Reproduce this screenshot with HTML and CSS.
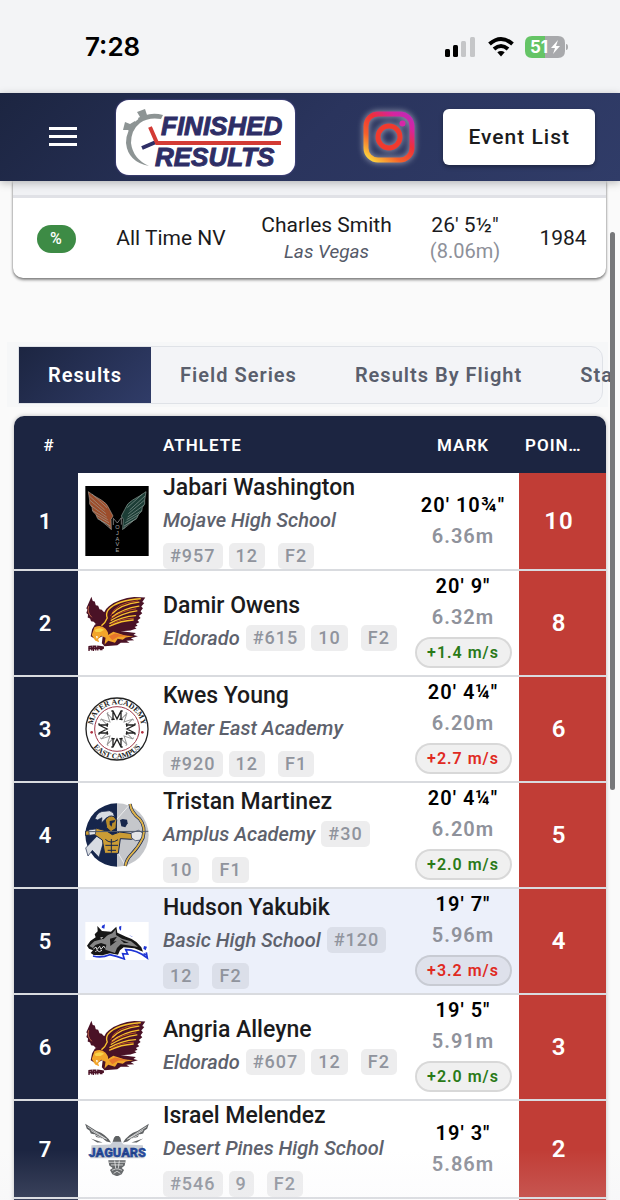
FILE: index.html
```html
<!DOCTYPE html>
<html lang="en">
<head>
    <meta charset="UTF-8">
    <meta name="viewport" content="width=device-width, initial-scale=1.0">
    <title>Finished Results</title>
    <link rel="stylesheet" href="styles.css">
</head>
<body>

    <!-- shared logos -->
    <svg class="defs" aria-hidden="true">
        <symbol id="eagle" viewBox="30 355 190 175">
            <path fill="#4a1226" d="M49 363 L34 397 L37 402 L34 411 L39 416 L38 425 L45 428 L48 436 L56 437 L62 444 L84 442 L96 412 L84 407 L80 402 L73 400 L69 390 L62 388 L59 377 L53 376 Z"/>
            <path fill="none" stroke="#f08a5a" stroke-width="2" d="M41 391 Q35 409 50 424"/>
            <path fill="#4a1226" d="M209 365 L176 364 Q132 368 101 391 Q83 405 87 426 Q76 437 59 446 L51 460 L47 480 L62 490 L95 474 L128 466 L165 463 L183 457 L177 453 L186 449 L181 444 L191 439 L186 433 L195 426 L190 420 L200 412 L195 406 L202 397 L197 392 L206 382 L200 379 Z"/>
            <g fill="none" stroke="#f9c22e" stroke-width="4" stroke-linecap="round">
                <path d="M194 369 Q125 373 99 402 Q91 414 96 426 Q90 441 80 448"/>
                <path d="M190 379 Q137 386 112 412"/>
                <path d="M190 391 Q143 398 111 423"/>
                <path d="M184 405 Q143 411 108 433"/>
                <path d="M180 419 Q139 422 104 442"/>
                <path d="M173 432 Q138 434 103 450"/>
            </g>
            <path fill="none" stroke="#e56a25" stroke-width="2" d="M187 375 Q119 382 106 420M182 399 Q142 403 106 428M175 427 Q135 427 106 447"/>
            <path fill="#4a1226" d="M86 451 L124 463 L151 467 L181 471 L174 477 L187 480 L166 486 L176 492 L153 494 L162 500 L136 500 L126 507 L88 510 L80 501 Z"/>
            <path fill="#f2a52b" d="M58 454 Q77 444 91 458 Q101 470 98 477 L114 467 L149 478 L174 480 L151 484 L142 491 L127 488 L119 500 L99 494 L88 505 L91 485 L78 479 L69 489 L72 498 L60 493 L50 477 Z"/>
            <path fill="#e8762c" d="M101 480 L119 472 L159 480 L128 482 L111 492 Z"/>
            <path fill="#f9d44c" d="M58 462 Q74 451 87 461 L76 468 L62 468 Z"/>
            <path fill="#fff" d="M62 479 L69 482 L65 488 Z"/>
            <path fill="none" stroke="#4a1226" stroke-width="6" d="M41 517 L86 515"/>
            <path fill="none" stroke="#4a1226" stroke-width="4" d="M42 524 V511 L50 510 V523 M55 524 V510 L62 510 V523 M68 523 V510 L76 511 V522 M80 522 V512 L86 513"/>
        </symbol>
    </svg>

    <div class="screen">

        <div class="status-bar">
            <span class="time">7:28</span>
            <div class="status-icons">
                <svg width="32" height="22" viewBox="0 0 32 22" aria-hidden="true">
                    <rect x="0" y="13" width="5" height="8" rx="1.5"/>
                    <rect x="8" y="9" width="5" height="12" rx="1.5"/>
                    <rect x="16" y="5" width="5" height="16" rx="1.5" fill="#c5c6c8"/>
                    <rect x="25" y="1" width="5" height="20" rx="1.5" fill="#c5c6c8"/>
                </svg>
                <svg width="26" height="22" viewBox="0 0 26 22" aria-hidden="true">
                    <g fill="none" stroke="#000" stroke-width="4">
                        <path d="M1.5 8 Q13 -2 24.500 8"/>
                        <path d="M6 13 Q13 7 20 13"/>
                    </g>
                    <path d="M9.300 16.300 Q13 13.500 16.700 16.300 L13 20.500 Z"/>
                </svg>
                <svg width="43" height="22" viewBox="0 0 43 22" aria-hidden="true">
                    <path fill="#65c466" d="M7 0 H20 V22 H7 Q0 22 0 15 V7 Q0 0 7 0 Z"/>
                    <path fill="#a8a9ac" d="M20 0 H33 Q40 0 40 7 V15 Q40 22 33 22 H20 Z"/>
                    <path fill="#a8a9ac" d="M41 8 Q43 8 43 11 Q43 14 41 14 Z"/>
                    <text x="5" y="17" class="battery-text">51</text>
                    <path fill="#fff" d="M33 4 L26 12 H30 L28 18 L35 10 H31 Z"/>
                </svg>
            </div>
        </div>

        <header class="navbar">
            <button class="menu-button" aria-label="Menu">
                <svg width="28" height="20" viewBox="0 0 28 20"><path fill="#fff" d="M0 0 H28 V3 H0 Z M0 8 H28 V11 H0 Z M0 16 H28 V19 H0 Z"/></svg>
            </button>
            <a class="brand" href="#" aria-label="Finished Results">
                <svg width="179" height="75" viewBox="0 0 179 75">
                    <path fill="#8d9494" d="M47 15 Q31 11 20 21 Q10 30 10 43 Q12 62 33 66 Q17 59 15 43 Q15 30 24 23 Q32 17 45 19 Z"/>
                    <path fill="#8d9494" d="M21 12 L29 9 L31 15 L35 15 L24 22 L22 18 L24 17 Z M9 22 L14 24 L19 21 L21 24 L14 32 L12 30 L7 30 Z"/>
                    <path fill="none" stroke="#2e2e66" stroke-width="4" d="M26 48 L40 42"/>
                    <path fill="none" stroke="#d33b35" stroke-width="4" d="M34 27 L41 43 H165"/>
                    <text x="45" y="35" class="brand-text">FINISHED</text>
                    <text x="39" y="66" class="brand-text">RESULTS</text>
                </svg>
            </a>
            <a class="instagram" href="#" aria-label="Instagram">
                <svg width="52" height="52" viewBox="0 0 52 52">
                    <defs>
                        <linearGradient id="insta" x1="0.1" y1="1" x2="0.9" y2="0">
                            <stop offset="0" stop-color="#fdd23c"/>
                            <stop offset="0.3" stop-color="#f5602a"/>
                            <stop offset="0.6" stop-color="#ee3038"/>
                            <stop offset="0.85" stop-color="#d624a0"/>
                            <stop offset="1" stop-color="#c02ab4"/>
                        </linearGradient>
                    </defs>
                    <rect x="3" y="3" width="46" height="46" rx="12" fill="none" stroke="url(#insta)" stroke-width="5"/>
                    <circle cx="26" cy="26" r="11" fill="none" stroke="#f03a2e" stroke-width="5"/>
                    <circle cx="39.500" cy="12.500" r="3" fill="#d826a8"/>
                </svg>
            </a>
            <button class="event-list">Event List</button>
        </header>

        <main>
            <div class="scroll-thumb"></div>

            <table class="records">
                <tr>
                    <td class="col-badge"><span class="badge">%</span></td>
                    <td class="col-record">All Time NV</td>
                    <td>Charles Smith<br><em>Las Vegas</em></td>
                    <td class="col-distance">26' 5½"<br><small>(8.06m)</small></td>
                    <td class="col-year">1984</td>
                </tr>
            </table>

            <div class="tab-area">
                <div class="tabs" role="tablist">
                    <button class="tab active" role="tab">Results</button>
                    <button class="tab" role="tab">Field Series</button>
                    <button class="tab" role="tab">Results By Flight</button>
                    <button class="tab" role="tab">Sta</button>
                </div>
            </div>

            <table class="results">
                <thead>
                    <tr>
                        <th class="col-place">#</th>
                        <th class="col-logo"></th>
                        <th class="col-athlete">Athlete</th>
                        <th class="col-mark">Mark</th>
                        <th class="col-points">Points</th>
                    </tr>
                </thead>
                <tbody>
                    <tr>
                        <td class="place">1</td>
                        <td class="logo">
                            <svg width="64" height="70" viewBox="30 33 190 210">
                                <path d="M30 33 H220 V243 H30 Z"/>
                                <g fill="#9c4d2b" stroke="#a39c93" stroke-width="2">
                                    <path d="M39 50 Q54 62 78 75 Q95 84 103 104 L113 123 L107 133 L108 164 Q97 148 90 144 L81 139 L66 129 L62 119 L52 109 L50 97 L43 87 L43 75 Z"/>
                                    <path fill="none" d="M42 63 L88 105 M44 76 L92 116 M46 91 L94 126 M52 107 L97 134 M62 120 L101 143 M66 131 L105 153 M50 57 L95 98 M77 137 L105 161"/>
                                </g>
                                <g fill="#1c3d36" stroke="#8a9c96" stroke-width="2">
                                    <path d="M212 50 Q196 62 172 75 Q155 84 148 104 L138 123 L144 133 L142 164 Q153 148 161 144 L170 139 L185 129 L189 119 L199 109 L201 97 L208 87 L208 75 Z"/>
                                    <path fill="none" d="M209 63 L163 105 M207 76 L159 116 M205 91 L157 126 M199 107 L154 134 M189 120 L150 143 M184 131 L146 153 M201 57 L156 98 M174 137 L146 161"/>
                                </g>
                                <path fill="none" stroke="#aaa" stroke-width="2" d="M114 130 V150 M114 130 L126 144 L138 128 V149"/>
                                <g class="mojave-text">
                                    <text x="126" y="163">O</text>
                                    <text x="126" y="180">J</text>
                                    <text x="126" y="197">A</text>
                                    <text x="126" y="214">V</text>
                                    <text x="126" y="231">E</text>
                                </g>
                            </svg>
                        </td>
                        <td class="athlete">
                            <div class="name">Jabari Washington</div>
                            <div class="meta"><em>Mojave High School</em><span class="chip">#957</span><span class="chip grade">12</span><span class="chip">F2</span></div>
                        </td>
                        <td class="mark"><b>20' 10¾"</b><span class="metric">6.36m</span></td>
                        <td class="points">10</td>
                    </tr>
                    <tr>
                        <td class="place">2</td>
                        <td class="logo"><svg width="64" height="59"><use href="#eagle"/></svg></td>
                        <td class="athlete">
                            <div class="name">Damir Owens</div>
                            <div class="meta"><em>Eldorado</em><span class="chip">#615</span><span class="chip grade">10</span><span class="chip">F2</span></div>
                        </td>
                        <td class="mark"><b>20' 9"</b><span class="metric">6.32m</span><span class="wind legal">+1.4 m/s</span></td>
                        <td class="points">8</td>
                    </tr>
                    <tr>
                        <td class="place">3</td>
                        <td class="logo">
                            <svg width="64" height="64" viewBox="30 64 192 192">
                                <defs>
                                    <path id="arc-top" d="M52 160 A74 74 0 0 1 200 160"/>
                                    <path id="arc-bottom" d="M37 160 A89 89 0 0 0 215 160"/>
                                    <path id="big-m" d="M-17 -29 H-7 M-12 -29 V-54 L0 -30 L12 -54 V-29 M7 -29 H17 M-17 -54 H-11 M11 -54 H17"/>
                                </defs>
                                <circle cx="126" cy="160" r="93" fill="#fff" stroke="#222" stroke-width="4"/>
                                <circle cx="126" cy="160" r="67" fill="none" stroke="#9c3547" stroke-width="3"/>
                                <text class="seal-text"><textPath href="#arc-top" startOffset="50%">MATER ACADEMY</textPath></text>
                                <text class="seal-text"><textPath href="#arc-bottom" startOffset="50%">EAST CAMPUS</textPath></text>
                                <g transform="translate(126 160)" fill="none" stroke="#999" stroke-width="3">
                                    <use href="#big-m" transform="rotate(45)"/>
                                    <use href="#big-m" transform="rotate(135)"/>
                                    <use href="#big-m" transform="rotate(225)"/>
                                    <use href="#big-m" transform="rotate(315)"/>
                                </g>
                                <g transform="translate(126 160)" fill="none" stroke="#222" stroke-width="4">
                                    <use href="#big-m"/>
                                    <use href="#big-m" transform="rotate(90)"/>
                                    <use href="#big-m" transform="rotate(180)"/>
                                    <use href="#big-m" transform="rotate(270)"/>
                                </g>
                                <circle cx="50" cy="170" r="4" fill="#b03040"/>
                                <circle cx="202" cy="170" r="4" fill="#b03040"/>
                            </svg>
                        </td>
                        <td class="athlete">
                            <div class="name">Kwes Young</div>
                            <div class="meta"><em>Mater East Academy</em><span class="chip">#920</span><span class="chip grade">12</span><span class="chip">F1</span></div>
                        </td>
                        <td class="mark"><b>20' 4¼"</b><span class="metric">6.20m</span><span class="wind aided">+2.7 m/s</span></td>
                        <td class="points">6</td>
                    </tr>
                    <tr>
                        <td class="place">4</td>
                        <td class="logo">
                            <svg width="64" height="64" viewBox="30 380 192 192">
                                <path fill="#16264c" d="M126 381 A95 95 0 0 0 126 571 Z"/>
                                <path fill="#c5c7cb" d="M126 381 A95 95 0 0 1 126 571 Z"/>
                                <path fill="none" stroke="#fff" stroke-width="2" d="M165 384 L125 429 M151 568 L126 524"/>
                                <path fill="#d8dce2" stroke="#16264c" stroke-width="2" d="M60 427 Q69 403 91 405 Q104 399 115 410 L119 424 L96 423 L79 440 L81 424 L67 431 Z M67 478 L92 479 L85 498 L72 543 L52 522 L39 539 L32 515 Z"/>
                                <path fill="#b98d2b" stroke="#16264c" stroke-width="3" d="M91 431 Q102 414 117 421 L125 432 L123 456 L108 466 L95 454 Z"/>
                                <path fill="#16264c" d="M104 434 L121 431 L118 438 L112 440 L110 451 L104 445 Z"/>
                                <path fill="#cb9c35" stroke="#16264c" stroke-width="3" d="M31 465 L65 456 L95 464 L112 475 L134 467 L174 472 L185 480 L170 489 L136 487 L130 531 L89 531 L82 491 L60 476 L31 477 Z"/>
                                <path fill="none" stroke="#16264c" stroke-width="3" d="M91 489 Q107 505 129 490 M91 507 H129 M109 488 V529 M98 522 H123"/>
                                <path fill="#e3e5e8" stroke="#16264c" stroke-width="2" d="M41 461 L63 458 L61 474 L43 477 Z M168 470 L191 462 L207 473 L199 491 L181 493 L170 485 Z"/>
                                <path fill="#16264c" d="M135 431 L143 428 L156 430 L158 441 L151 453 L139 450 Z"/>
                                <path fill="none" stroke="#16264c" stroke-width="10" d="M165 383 Q169 409 194 428 Q213 451 204 484 Q190 513 169 534 Q154 549 151 569"/>
                                <path fill="none" stroke="#ddb24b" stroke-width="6" d="M165 383 Q169 409 194 428 Q213 451 204 484 Q190 513 169 534 Q154 549 151 569"/>
                                <path stroke="#4f5969" stroke-width="3" d="M41 466 L220 465"/>
                            </svg>
                        </td>
                        <td class="athlete">
                            <div class="name">Tristan Martinez</div>
                            <div class="meta"><em>Amplus Academy</em><span class="chip">#30</span><span class="chip grade">10</span><span class="chip">F1</span></div>
                        </td>
                        <td class="mark"><b>20' 4¼"</b><span class="metric">6.20m</span><span class="wind legal">+2.0 m/s</span></td>
                        <td class="points">5</td>
                    </tr>
                    <tr class="selected">
                        <td class="place">5</td>
                        <td class="logo">
                            <svg width="64" height="38" viewBox="30 105 190 114">
                                <path fill="#fff" d="M30 105 H220 V219 H30 Z"/>
                                <path fill="none" stroke="#1f35d5" stroke-width="5" d="M53 207 Q79 214 103 203 Q123 207 147 216 L142 200 L157 201 L151 188 Q184 188 216 213 L213 196"/>
                                <path fill="#1f35d5" d="M80 116 L89 112 L87 125 L79 122 Z M131 119 L138 116 L137 131 L132 127 Z M160 145 L174 151 L168 147 Z M206 177 L215 179 L211 190 L204 185 Z M204 197 L215 202 L208 207 Z"/>
                                <path fill="#161616" d="M35 176 L45 162 L61 151 L58 142 L67 133 L66 117 L80 132 L107 134 L123 119 L126 137 L152 149 L169 156 L183 165 L198 181 L203 194 L177 184 L145 181 L134 190 L128 203 L104 199 L81 205 L55 204 L46 198 L53 190 L41 185 Z"/>
                                <path fill="#858585" d="M42 177 L57 163 L79 157 L91 147 L111 139 L121 127 L122 144 L140 155 L167 163 L188 180 L157 175 L136 172 L125 183 L119 198 L90 188 L93 173 L77 168 L60 174 L53 183 Z"/>
                                <path fill="#161616" d="M68 151 L98 143 L84 157 Z M104 155 L125 149 L114 164 L124 162 L105 177 Z M134 157 L161 168 L146 168 Z"/>
                                <path fill="none" stroke="#ddd" stroke-width="3" d="M54 186 L62 180 L65 188 L73 178 L77 187 L85 177 L90 184 M60 195 L65 190 L72 194 L80 190"/>
                                <path fill="#fff" d="M74 152 L84 150 L78 155 Z"/>
                            </svg>
                        </td>
                        <td class="athlete">
                            <div class="name">Hudson Yakubik</div>
                            <div class="meta"><em>Basic High School</em><span class="chip">#120</span><span class="chip grade">12</span><span class="chip">F2</span></div>
                        </td>
                        <td class="mark"><b>19' 7"</b><span class="metric">5.96m</span><span class="wind aided">+3.2 m/s</span></td>
                        <td class="points">4</td>
                    </tr>
                    <tr>
                        <td class="place">6</td>
                        <td class="logo"><svg width="64" height="59"><use href="#eagle"/></svg></td>
                        <td class="athlete">
                            <div class="name">Angria Alleyne</div>
                            <div class="meta"><em>Eldorado</em><span class="chip">#607</span><span class="chip grade">12</span><span class="chip">F2</span></div>
                        </td>
                        <td class="mark"><b>19' 5"</b><span class="metric">5.91m</span><span class="wind legal">+2.0 m/s</span></td>
                        <td class="points">3</td>
                    </tr>
                    <tr>
                        <td class="place">7</td>
                        <td class="logo">
                            <svg width="64" height="53" viewBox="30 707 190 158">
                                <g fill="#5f6264">
                                    <path d="M30 709 L64 731 Q92 740 107 765 L94 762 L82 753 L63 749 L59 741 L47 738 L43 729 L35 724 Z"/>
                                    <path d="M220 709 L186 731 Q158 740 143 765 L156 762 L168 753 L187 749 L191 741 L203 738 L207 729 L215 724 Z"/>
                                    <path d="M47 753 L82 765 H66 Z M203 753 L168 765 H184 Z M116 751 L121 746 H130 L135 751 L138 764 H112 Z"/>
                                    <path d="M99 818 L151 818 L148 834 L139 841 L146 847 L139 860 L125 866 L111 860 L104 847 L112 841 L102 834 Z"/>
                                </g>
                                <path fill="none" stroke="#fff" stroke-width="2" d="M37 718 L95 756 M47 729 L90 754 M57 741 L86 756 M213 718 L155 756 M203 729 L160 754 M193 741 L164 756 M101 824 H149 M107 832 H143 M118 819 L121 842 M132 819 L129 842 M110 848 L121 844 L129 844 L140 848 M115 857 L125 851 L135 857"/>
                                <path fill="#c9ced6" d="M49 773 L105 771 L113 763 H137 L145 771 L202 773 L207 812 H45 Z"/>
                                <text x="126" y="808" class="jaguars-text">JAGUARS</text>
                            </svg>
                        </td>
                        <td class="athlete">
                            <div class="name">Israel Melendez</div>
                            <div class="meta"><em>Desert Pines High School</em><span class="chip">#546</span><span class="chip grade">9</span><span class="chip">F2</span></div>
                        </td>
                        <td class="mark"><b>19' 3"</b><span class="metric">5.86m</span></td>
                        <td class="points">2</td>
                    </tr>
                    <tr>
                        <td class="place"></td>
                        <td class="logo"></td>
                        <td class="athlete"></td>
                        <td class="mark"></td>
                        <td class="points"></td>
                    </tr>
                </tbody>
            </table>
            <div class="bottom-fade"></div>
        </main>
    </div>

</body>
</html>
```

FILE: styles.css
```css
* {
    box-sizing: border-box;
}
body {
    margin: 0;
    font-family: Roboto, 'Liberation Sans', sans-serif;
    background-color: #fafafa;
    color: #1b1b1d;
}
button {
    font-family: inherit;
    border: none;
    cursor: pointer;
}
.defs {
    display: block;
    width: 0;
    height: 0;
}
.screen {
    display: flex;
    flex-direction: column;
    height: 100vh;
    overflow: hidden;
}

/* phone status bar */
.status-bar {
    display: flex;
    flex: none;
    justify-content: space-between;
    align-items: center;
    height: 93px;
    padding: 0 52px 0 85px;
    background-color: #f3f4f6;
}
.time {
    font-family: Inter, sans-serif;
    font-size: 26px;
    font-weight: 600;
    color: #000;
}
.status-icons {
    display: flex;
    align-items: center;
    gap: 11px;
}
.battery-text {
    font-family: Inter, sans-serif;
    font-size: 17px;
    font-weight: 700;
    fill: #fff;
}

/* top bar */
.navbar {
    display: flex;
    flex: none;
    align-items: center;
    height: 88px;
    padding: 0 25px 0 49px;
    background: linear-gradient(135deg, #1c2541 0%, #2a345d 50%, #303c68 100%);
    box-shadow: 0 2px 8px rgba(0, 0, 0, 0.25);
    position: relative;
    z-index: 1;
}
.menu-button {
    display: flex;
    padding: 0;
    background: none;
}
.brand {
    display: flex;
    margin-left: 39px;
    background-color: #fff;
    border-radius: 13px;
    box-shadow: 0 0 2px #6d5fae;
}
.brand-text {
    font-family: 'Liberation Sans', sans-serif;
    font-size: 26px;
    font-weight: bold;
    font-style: italic;
    fill: #2e2e66;
    stroke: #2e2e66;
    stroke-width: 1px;
}
.instagram {
    display: flex;
    margin-left: auto;
    filter: drop-shadow(0 0 3px rgba(255, 255, 255, 0.6));
}
.event-list {
    height: 56px;
    margin-left: 28px;
    padding: 0 25px;
    background-color: #fff;
    color: #1b1b1d;
    font-size: 21px;
    font-weight: 500;
    letter-spacing: 1px;
    border-radius: 6px;
    box-shadow: 0 2px 4px rgba(0, 0, 0, 0.35);
}

main {
    flex: 1;
    min-height: 0;
    overflow: hidden;
    position: relative;
}
.scroll-thumb {
    position: absolute;
    z-index: 2;
    top: 51px;
    right: 5px;
    width: 5px;
    height: 558px;
    border-radius: 3px;
    background-color: #77787a;
}

/* records card */
.records {
    width: calc(100% - 27px);
    margin-left: 13px;
    table-layout: fixed;
    border-collapse: separate;
    border-spacing: 0;
    border-top: 14px solid #f0f1f4;
    border-radius: 0 0 10px 10px;
    background-color: #fff;
    box-shadow: 0 2px 3px rgba(0, 0, 0, 0.45), 0 0 2px rgba(0, 0, 0, 0.3);
}
.records td {
    height: 83px;
    padding: 0;
    border-top: 3px solid #e0e1e6;
    text-align: center;
    font-size: 21px;
    line-height: 26px;
}
.records em {
    font-size: 19px;
    color: #555a68;
}
.records small {
    font-size: 20px;
    color: #8d9099;
}
.records .col-badge {
    width: 86px;
}
.records .col-record {
    width: 144px;
}
.records .col-distance {
    width: 110px;
}
.records .col-year {
    width: 86px;
}
.badge {
    display: inline-block;
    width: 39px;
    border-radius: 14px;
    background-color: #3d8b45;
    color: #fff;
    font-size: 16px;
    font-weight: 500;
    line-height: 28px;
}

/* tabs */
.tab-area {
    margin: 64px 12px 0 7px;
    padding: 4px 5px 3px 11px;
    background-color: #f6f7f8;
}
.tabs {
    display: flex;
    height: 58px;
    border: 1px solid #dfe2e7;
    border-radius: 0 12px 12px 0;
    background-color: #f3f4f7;
}
.tab {
    flex: none;
    padding: 0 29px;
    background: none;
    color: #5a5f6d;
    font-size: 20px;
    font-weight: 600;
    letter-spacing: 1px;
}
.tab.active {
    background: linear-gradient(135deg, #1c2541, #303c68);
    color: #fff;
}

/* results table */
.results {
    width: calc(100% - 28px);
    margin: 9px 14px 0;
    table-layout: fixed;
    border-collapse: separate;
    border-spacing: 0;
    border-radius: 10px 10px 0 0;
    background-color: #fff;
    box-shadow: 0 0 4px rgba(0, 0, 0, 0.25);
    overflow: hidden;
}
.results th {
    height: 57px;
    padding: 0;
    background-color: #1c2541;
    color: #fff;
    font-size: 17px;
    font-weight: 600;
    letter-spacing: 1px;
    text-transform: uppercase;
}
.col-place {
    width: 64px;
}
.results .col-place {
    padding-left: 6px;
}
.col-logo {
    width: 78px;
}
.results .col-athlete {
    padding-left: 7px;
    text-align: left;
}
.col-mark {
    width: 112px;
}
.col-points {
    width: 87px;
}
.results .col-points {
    padding: 0 20px 0 6px;
    text-align: left;
    overflow: hidden;
    white-space: nowrap;
    text-overflow: ellipsis;
}
.results td {
    height: 98px;
    padding: 0;
    border-bottom: 2px solid #d9dbdf;
}
.results .place {
    padding-right: 2px;
    background-color: #1c2541;
    color: #fff;
    font-size: 22px;
    font-weight: 600;
    text-align: center;
}
.results .points {
    padding-right: 7px;
    background-color: #c13d36;
    color: #fff;
    font-size: 24px;
    font-weight: 600;
    letter-spacing: 1px;
    text-align: center;
}
.logo svg {
    display: block;
    margin: 0 auto;
}
.results .athlete {
    padding: 0 7px;
}
.name {
    font-size: 23px;
    font-weight: 500;
    line-height: 30px;
}
.meta {
    display: flex;
    flex-wrap: wrap;
    align-items: center;
    gap: 6px;
    line-height: 26px;
}
.meta em {
    color: #5d616c;
    font-size: 20px;
    font-weight: 500;
    line-height: 34px;
}
.chip {
    padding: 0 7px;
    border-radius: 5px;
    background-color: rgba(0, 0, 20, 0.07);
    color: #90949d;
    font-size: 18px;
    font-weight: 500;
    letter-spacing: 1px;
}
.grade {
    margin-right: 7px;
}
.mark {
    text-align: center;
}
.mark b,
.metric {
    display: block;
    font-size: 20px;
    font-weight: 600;
    letter-spacing: 1px;
    line-height: 31px;
}
.mark b {
    color: #000;
}
.metric {
    color: #8f929b;
}
.wind {
    display: block;
    width: 97px;
    margin: 4px auto 7px;
    border: 2px solid rgba(0, 0, 0, 0.1);
    border-radius: 16px;
    background-color: rgba(0, 0, 0, 0.06);
    font-size: 16px;
    font-weight: 600;
    letter-spacing: 1px;
    line-height: 27px;
}
.legal {
    color: #2a7a17;
}
.aided {
    color: #e02a22;
}
.selected {
    background-color: #ecf0fa;
}
.bottom-fade {
    position: absolute;
    left: 0;
    right: 0;
    bottom: 0;
    height: 50px;
    background: linear-gradient(rgba(255, 255, 255, 0), rgba(235, 235, 242, 0.15));
}

/* text inside the school logos */
.mojave-text {
    font-family: 'Liberation Sans', sans-serif;
    font-size: 17px;
    fill: #aaa;
    text-anchor: middle;
}
.seal-text {
    font-family: 'Liberation Serif', serif;
    font-size: 23px;
    font-weight: bold;
    fill: #222;
    text-anchor: middle;
}
.jaguars-text {
    font-family: Roboto, sans-serif;
    font-size: 38px;
    font-weight: 900;
    fill: #244aa5;
    stroke: #17346f;
    stroke-width: 1px;
    text-anchor: middle;
}
```
